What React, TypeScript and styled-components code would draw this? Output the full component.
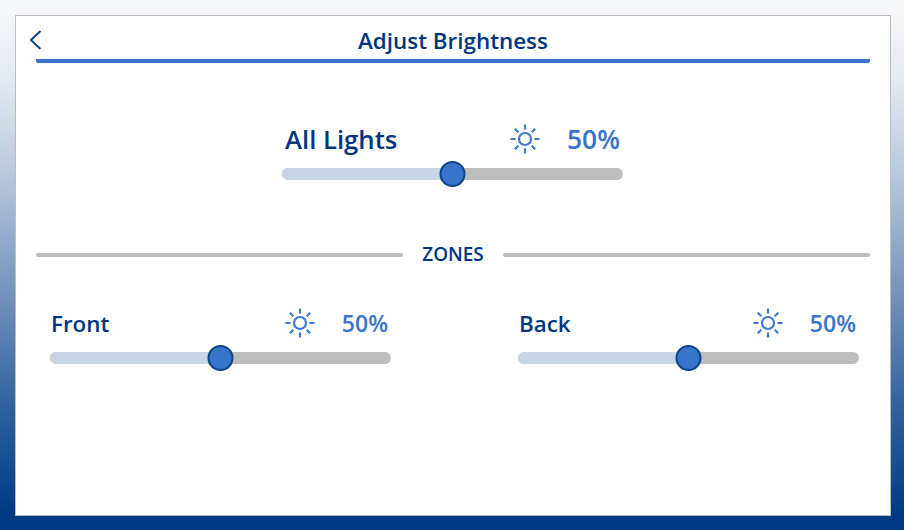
import React from "react";
import styled, { createGlobalStyle } from "styled-components";

const GlobalStyle = createGlobalStyle`
    html, body {
        margin: 0;
        padding: 0;
    }
    body {
        font-family: "Open Sans", "Noto Sans", sans-serif;
    }
`;

const Screen = styled.div`
    width: 904px;
    height: 530px;
    box-sizing: border-box;
    padding: 15px 13px 14px 15px;
    background: linear-gradient(180deg, #f8f9fb 0%, #e4e9f1 15%, #b8c8dc 33%, #7f9abf 52%, #33639f 76%, #003a85 97%);
    overflow: hidden;
`;

const Card = styled.div`
    height: 100%;
    box-sizing: border-box;
    background: #fff;
    border: 1px solid #bdbdbd;
    padding: 0 20px;
`;

const Header = styled.header`
    display: flex;
    align-items: center;
    justify-content: center;
    height: 43px;
    border-bottom: 4px solid #3874cb;
    border-radius: 0 0 2px 2px;
    position: relative;
`;

const BackButton = styled.button`
    position: absolute;
    left: -10px;
    top: 13px;
    width: 16px;
    height: 22px;
    padding: 0;
    border: none;
    background: none;
    display: flex;
`;

const Title = styled.h1`
    margin: 5px 0 0;
    font-size: 22.4px;
    font-weight: 600;
    color: #00367f;
`;

const Main = styled.div`
    display: flex;
    justify-content: center;
    padding: 58px 1px 0 0;
`;

const Control = styled.div`
    width: 341px;
`;

const ControlHead = styled.div<{ $large?: boolean }>`
    display: flex;
    align-items: center;
    height: ${(props) => (props.$large ? 36 : 32)}px;
    margin-bottom: ${(props) => (props.$large ? 11 : 13)}px;
    padding: 0 3px 0 ${(props) => (props.$large ? 3 : 1)}px;
`;

const Label = styled.span<{ $large?: boolean }>`
    flex: 1;
    font-size: ${(props) => (props.$large ? 25.7 : 22.4)}px;
    font-weight: 600;
    color: #00367f;
`;

const Percent = styled.span<{ $large?: boolean }>`
    margin-left: 27px;
    font-size: ${(props) => (props.$large ? 26.4 : 23)}px;
    font-weight: 600;
    color: #3874cb;
`;

const Track = styled.div`
    height: 12px;
    border-radius: 6px;
    background: #bdbdbd;
    position: relative;
`;

const Fill = styled.div`
    height: 100%;
    border-radius: 6px 0 0 6px;
    background: #c7d5e7;
`;

const Thumb = styled.div`
    position: absolute;
    top: 50%;
    width: 26px;
    height: 26px;
    box-sizing: border-box;
    border: 2px solid #0b4488;
    border-radius: 50%;
    background: #3874cb;
    transform: translate(-13.5px, -50%);
`;

const Divider = styled.div`
    display: flex;
    align-items: center;
    gap: 19px;
    margin-top: 62px;
`;

const Rule = styled.div`
    flex: 1;
    height: 4px;
    border-radius: 2px;
    background: #bdbdbd;
`;

const DividerText = styled.span`
    font-size: 18.9px;
    line-height: 25px;
    font-weight: 600;
    color: #00367f;
`;

const Zones = styled.div`
    display: flex;
    justify-content: space-between;
    padding: 40px 11px 0 14px;
`;

function SunIcon({ size }: { size: number }) {
    return (
        <svg width={size} height={size} viewBox="0 0 30 30" fill="none" stroke="#3a7ad6" strokeWidth="2.2">
            <circle cx="15" cy="15" r="6" />
            <path d="M15 0.5V5.5M15 24.5V29.5M0.5 15H5.5M24.5 15H29.5M4.8 4.8L8.3 8.3M21.7 21.7L25.2 25.2M4.8 25.2L8.3 21.7M21.7 8.3L25.2 4.8" />
        </svg>
    );
}

function Slider({ label, value, large }: { label: string; value: number; large?: boolean }) {
    return (
        <Control>
            <ControlHead $large={large}>
                <Label $large={large}>{label}</Label>
                <SunIcon size={30} />
                <Percent $large={large}>{value}%</Percent>
            </ControlHead>
            <Track>
                <Fill style={{ width: `${value}%` }} />
                <Thumb style={{ left: `${value}%` }} />
            </Track>
        </Control>
    );
}

export default function App() {
    return (
        <Screen>
            <GlobalStyle />
            <Card>
                <Header>
                    <BackButton aria-label="Back">
                        <svg width="16" height="22" viewBox="0 0 16 22" fill="none" stroke="#0b4488" strokeWidth="2">
                            <path d="M14.5 2L5 11L14.5 20" />
                        </svg>
                    </BackButton>
                    <Title>Adjust Brightness</Title>
                </Header>
                <Main>
                    <Slider label="All Lights" value={50} large />
                </Main>
                <Divider>
                    <Rule />
                    <DividerText>ZONES</DividerText>
                    <Rule />
                </Divider>
                <Zones>
                    <Slider label="Front" value={50} />
                    <Slider label="Back" value={50} />
                </Zones>
            </Card>
        </Screen>
    );
}
